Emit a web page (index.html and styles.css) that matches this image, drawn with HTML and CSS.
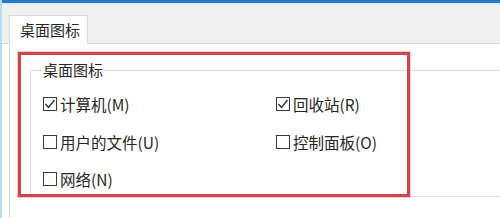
FILE: index.html
```html
<!DOCTYPE html>
<html lang="zh-CN">
<head>
<meta charset="utf-8">
<title>桌面图标设置</title>
<link rel="stylesheet" href="styles.css">
</head>
<body>
<div class="app">
  <div class="titlebar"></div>
  <div class="strip">
    <div class="tab">桌面图标</div>
  </div>
  <div class="panel">
    <fieldset class="group">
      <legend class="legend">桌面图标</legend>
      <div class="options">
        <label class="opt"><span class="box checked"><svg viewBox="0 0 14 14" width="14" height="14"><polyline points="2.5,7 5.5,10.5 11.5,3" fill="none" stroke="#2b2b2b" stroke-width="1.3"/></svg></span>计算机(M)</label>
        <label class="opt"><span class="box checked"><svg viewBox="0 0 14 14" width="14" height="14"><polyline points="2.5,7 5.5,10.5 11.5,3" fill="none" stroke="#2b2b2b" stroke-width="1.3"/></svg></span>回收站(R)</label>
        <label class="opt"><span class="box"></span>用户的文件(U)</label>
        <label class="opt"><span class="box"></span>控制面板(O)</label>
        <label class="opt"><span class="box"></span>网络(N)</label>
      </div>
    </fieldset>
    <div class="highlight"></div>
  </div>
</div>
</body>
</html>
```

FILE: styles.css
```css
html, body {
  margin: 0;
  padding: 0;
  background: #ffffff;
}
body {
  width: 500px;
  height: 218px;
  overflow: hidden;
  font-family: "Noto Sans CJK SC", "Noto Sans", sans-serif;
  font-size: 15px;
  color: #262626;
}
.app {
  height: 218px;
  border-left: 2px solid #b9dbf1;
  box-sizing: border-box;
}
.titlebar {
  height: 3px;
  background: #2a78c8;
}
.strip {
  box-sizing: border-box;
  height: 41px;
  background: #f0f0f0;
  border-top: 2px solid #d6f0fb;
  border-bottom: 1px solid #d8d8d8;
  padding-left: 7px;
  display: flex;
  align-items: flex-end;
}
.tab {
  box-sizing: border-box;
  width: 79px;
  height: 29px;
  margin-bottom: -1px;
  background: #ffffff;
  border: 1px solid #dadada;
  border-bottom: none;
  padding-left: 10px;
  line-height: 27px;
}
.panel {
  position: relative;
  margin-left: 7px;
  height: 174px;
  border-left: 1px solid #dadada;
  padding-top: 17px;
  box-sizing: border-box;
}
.group {
  margin: 0 0 0 20px;
  width: 470px;
  height: 136px;
  box-sizing: border-box;
  border: 1px solid #dcdcdc;
  border-right: none;
  padding: 0 0 0 11px;
}
.legend {
  padding: 0 1px;
  line-height: 18px;
}
.options {
  margin-top: 15px;
  display: grid;
  grid-template-columns: 233px auto;
  grid-auto-rows: 20px;
  row-gap: 17.5px;
  font-size: 15.5px;
}
.opt {
  display: flex;
  align-items: center;
  gap: 3px;
  line-height: 20px;
  white-space: nowrap;
}
.box {
  box-sizing: border-box;
  width: 14px;
  height: 14px;
  margin-left: 1px;
  border: 1px solid #3a3a3a;
  display: flex;
  align-items: center;
  justify-content: center;
}
.box svg {
  display: block;
  flex: none;
}
.highlight {
  position: absolute;
  left: 8px;
  top: 8px;
  width: 392px;
  height: 145px;
  box-sizing: border-box;
  border: 3px solid #cf454c;
  box-shadow: 0 0 0 1px rgba(225, 140, 145, 0.45);
}
```
